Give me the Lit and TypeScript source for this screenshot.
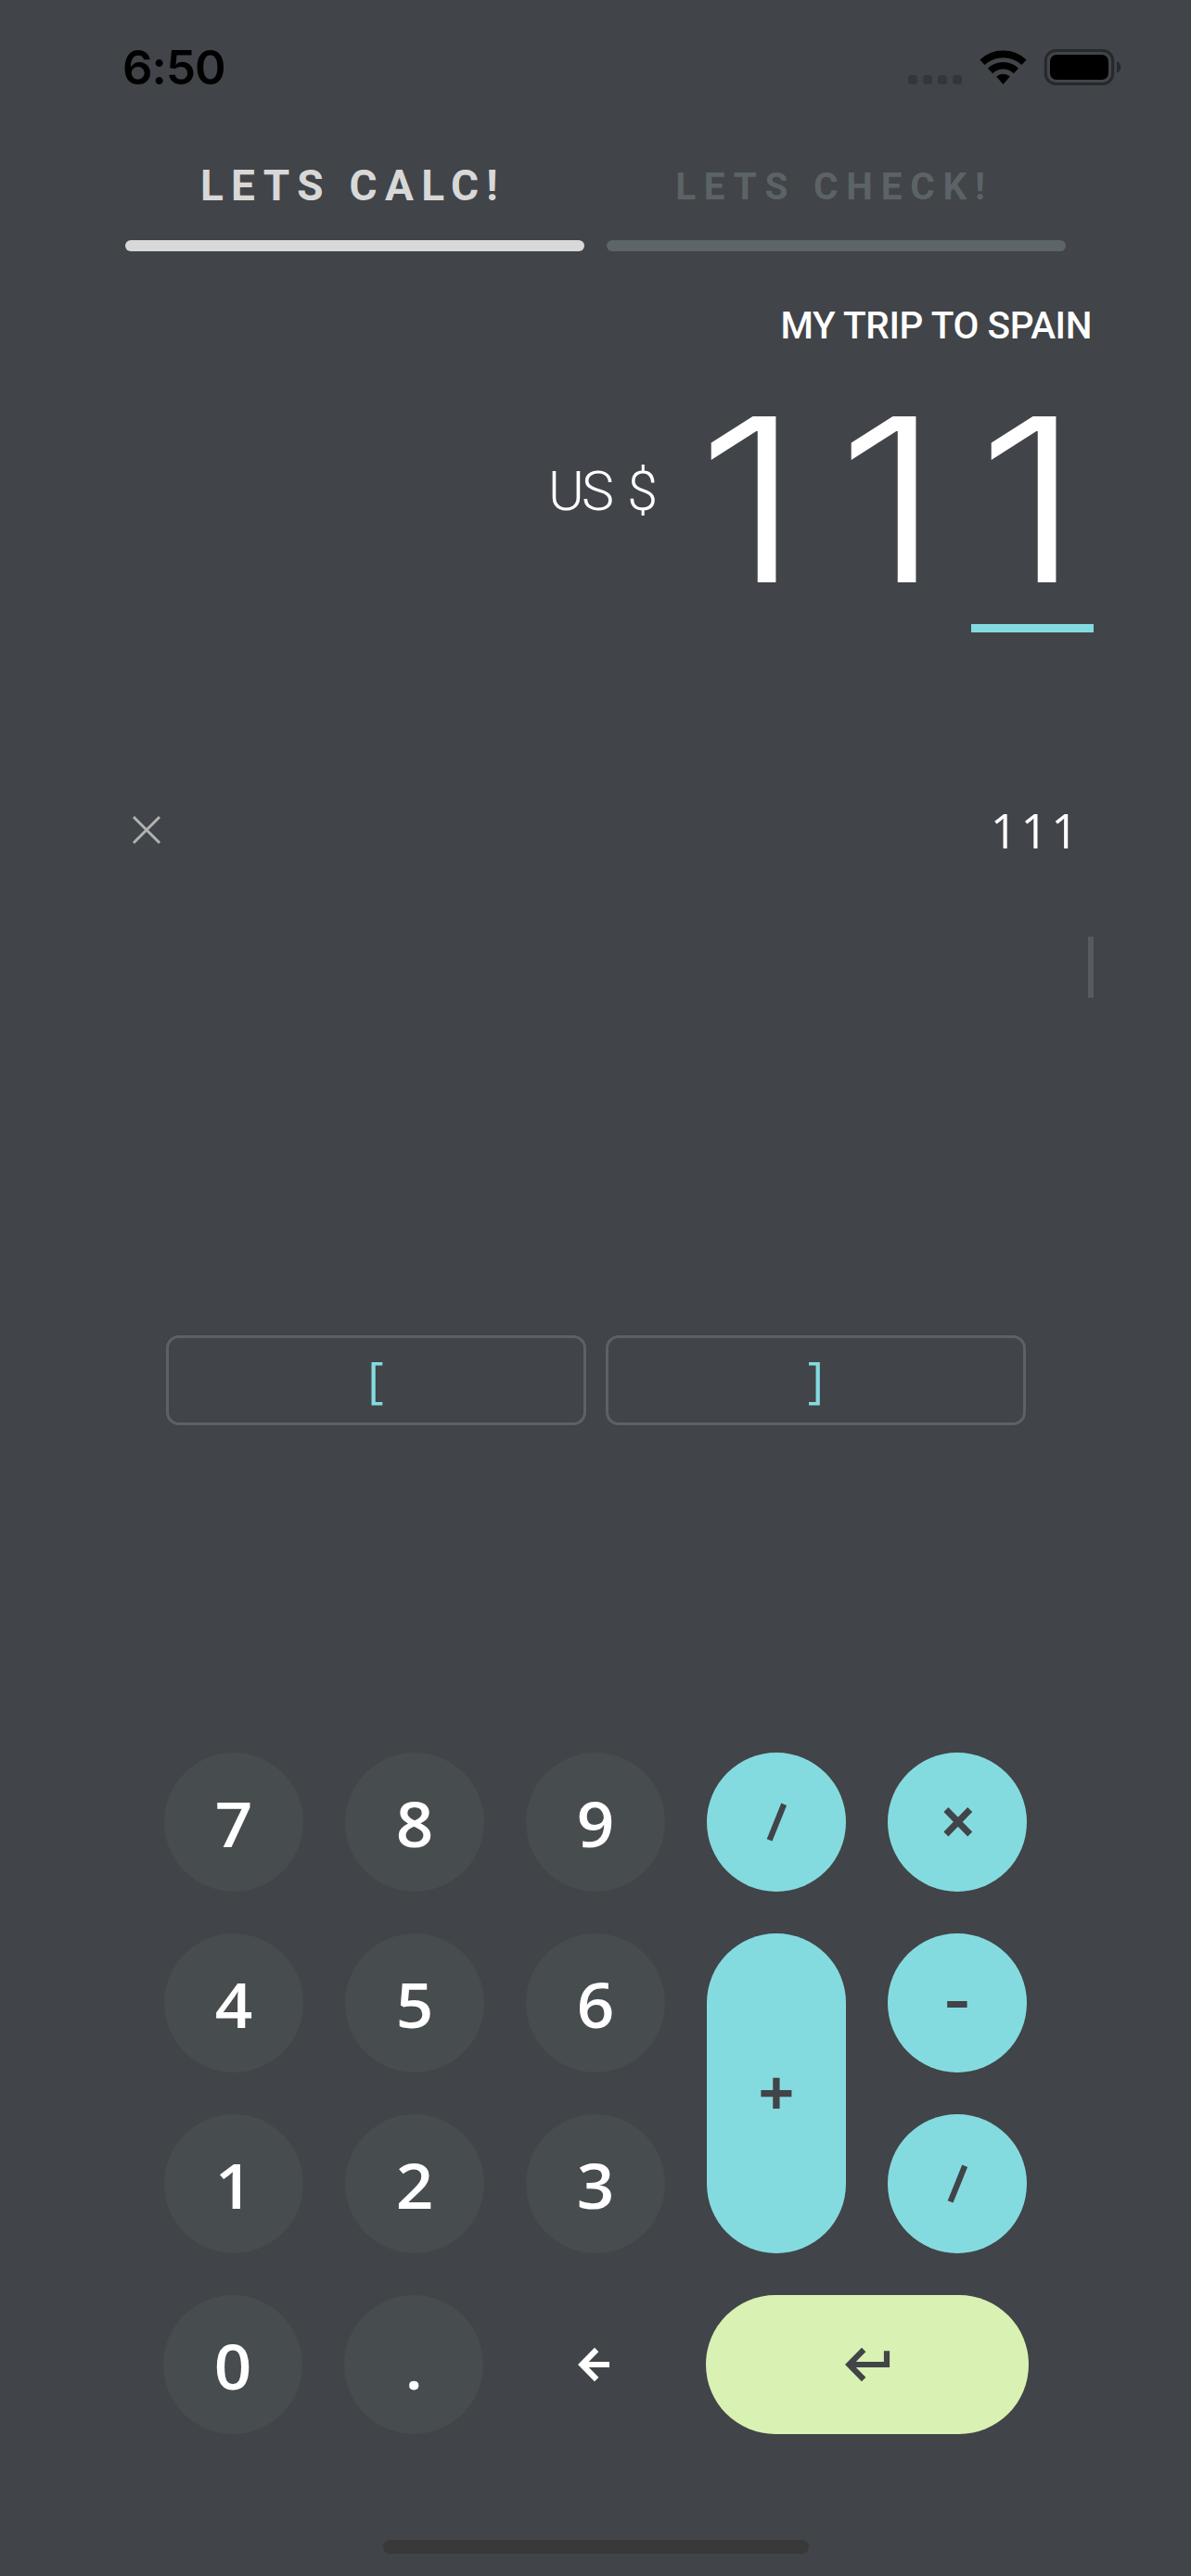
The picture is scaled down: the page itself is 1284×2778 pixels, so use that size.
import { LitElement, html, svg, css } from "lit";
import { customElement, property } from "lit/decorators.js";

const icons: Record<string, unknown> = {
  slash: svg`<path d="M39.2 13.8 23.6 52.4" stroke-width="6.3"/>`,
  times: svg`<path d="M18.9 19.5 44.7 46 M44.7 19.5 18.9 46" stroke-width="7"/>`,
  back: svg`<path d="M33.2 15 17.4 31 33.2 47 M17.4 31H47" stroke-width="6.2"/>`,
};

@customElement("calc-key")
export class CalcKey extends LitElement {
  @property({ reflect: true }) label = "";
  @property() icon = "";
  @property({ reflect: true }) kind = "digit";

  static styles = css`
    :host {
      display: flex;
      align-items: center;
      justify-content: center;
      border-radius: 75px;
      background: #474c4f;
      color: #fff;
      font: 600 67px/150px "Open Sans", sans-serif;
    }
    :host([kind="op"]) {
      background: #84dbdf;
      color: #414448;
    }
    :host([kind="enter"]) {
      background: #d9f1b2;
      color: #414448;
    }
    :host([kind="bare"]) {
      background: none;
    }
    .label {
      padding-top: 2px;
      transform: scaleX(1.06);
    }
    :host([kind="op"]) .label {
      padding: 0 0 4px;
      font-size: 68px;
      font-weight: 700;
      transform: none;
    }
    :host([label="-"]) .label {
      padding-bottom: 13px;
      transform: scale(1.2, 0.85);
    }
    svg {
      fill: none;
      stroke: currentColor;
      display: block;
    }
  `;

  render() {
    if (this.icon === "enter") {
      return html`<svg width="60" height="62" viewBox="0 0 60 62">
        <path d="M26.2 15 10.4 31 26.2 47 M10.4 31H51V16.2" stroke-width="6.2" />
      </svg>`;
    }
    if (this.icon) {
      return html`<svg width="62" height="66" viewBox=${this.icon === "back" ? "0 -2 62 66" : "0 0 62 66"}>${icons[this.icon]}</svg>`;
    }
    return html`<span class="label">${this.label}</span>`;
  }
}

@customElement("app-root")
export class AppRoot extends LitElement {
  static styles = css`
    :host {
      display: flex;
      flex-direction: column;
      box-sizing: border-box;
      width: 1284px;
      height: 2778px;
      overflow: hidden;
      background: #414448;
      color: #fff;
      font-family: Roboto, sans-serif;
    }
    .status {
      display: flex;
      align-items: flex-start;
      justify-content: space-between;
      height: 140px;
      box-sizing: border-box;
      padding: 42px 75px 0 132px;
      color: #000;
    }
    .time {
      font: 600 51px/62px Inter, sans-serif;
      letter-spacing: -1px;
    }
    .tabs {
      display: flex;
      gap: 24px;
      height: 131px;
      padding-left: 135px;
    }
    .tab {
      display: flex;
      flex-direction: column;
      justify-content: space-between;
      width: 495px;
      color: #5c6366;
      text-align: center;
      font-weight: 700;
      font-size: 40.5px;
      line-height: 122px;
      letter-spacing: 8.8px;
    }
    .tab.active {
      color: #d8d8d8;
      font-size: 46px;
      line-height: 120px;
      letter-spacing: 8.3px;
    }
    .tab span {
      height: 119px;
      padding-right: 4px;
    }
    .bar {
      height: 12px;
      border-radius: 6px;
      background: #5d646a;
    }
    .active .bar {
      background: #d8d8d8;
    }
    .trip {
      margin: 46px 107px 0 0;
      text-align: right;
      font-size: 40.5px;
      font-weight: 500;
      line-height: 68px;
      letter-spacing: -0.4px;
    }
    .amount {
      display: flex;
      justify-content: flex-end;
      align-items: center;
      height: 288px;
      padding-right: 93px;
    }
    .currency {
      padding-top: 2px;
      font: 300 59px/80px Roboto, sans-serif;
      letter-spacing: -3px;
      word-spacing: 6px;
    }
    .value {
      display: flex;
      justify-content: flex-end;
      box-sizing: border-box;
      width: 485px;
      padding: 20px 6px 0 0;
      font: 300 246px/288px Inter, sans-serif;
    }
    .value span {
      width: 151px;
      text-align: center;
      transform: scaleX(1.17);
    }
    .underline {
      align-self: flex-end;
      width: 132px;
      height: 9px;
      margin-right: 105px;
      background: #84dbdf;
    }
    .entry {
      display: flex;
      align-items: center;
      justify-content: space-between;
      height: 80px;
      margin: 173px 0 0;
      padding: 0 118px 0 142px;
    }
    .entry svg {
      stroke: #b2b2b2;
      stroke-width: 3;
    }
    .entry span {
      font: 400 51px/80px "Open Sans", sans-serif;
      letter-spacing: 3.6px;
    }
    .cursor {
      align-self: flex-end;
      width: 6px;
      height: 66px;
      margin: 75px 105px 0 0;
      background: #555b5f;
    }
    .brackets {
      display: flex;
      justify-content: space-between;
      margin: 364px 178px 0 178.5px;
    }
    .bracket {
      box-sizing: border-box;
      width: 453px;
      height: 97px;
      border: 3.5px solid #5b6265;
      border-radius: 14px;
      color: #84dbdf;
      text-align: center;
      font: 500 53px/88px "Open Sans", sans-serif;
    }
    .pad {
      display: grid;
      grid-template-columns: repeat(5, 150px);
      grid-template-rows: repeat(3, 150px);
      gap: 45px;
      margin: 353px 0 0 177px;
    }
    .plus {
      grid-column: 4;
      grid-row: 2 / span 2;
    }
    .last {
      display: grid;
      grid-template-columns: 150px 150px 150px 348px;
      grid-template-rows: 150px;
      gap: 45px;
      margin: 45px 0 0 176px;
    }
    .home {
      align-self: flex-start;
      width: 459px;
      height: 15px;
      margin: 114px 0 0 413px;
      border-radius: 8px;
      background: #393939;
    }
  `;

  render() {
    const d = (n: string) => html`<calc-key label=${n}></calc-key>`;
    return html`
      <div class="status">
        <span class="time">6:50</span>
        <svg width="232" height="52" viewBox="977 42 232 52">
          <g fill="#34363a">
            ${[979, 995, 1011, 1027].map((x) => svg`<rect x=${x} y="81" width="10" height="10" rx="3.5"/>`)}
          </g>
          <g fill="none" stroke="#000" stroke-width="7.6">
            <path d="M1059 67.2A33 33 0 0 1 1104 67.2" />
            <path d="M1067.6 76.4A20 20 0 0 1 1095.4 76.4" />
          </g>
          <path d="M1081.5 91 1074.2 82.6A11 11 0 0 1 1088.8 82.6Z" />
          <rect x="1127.3" y="54.5" width="72.4" height="36" rx="11" fill="none" stroke="#26292b" stroke-width="3" />
          <rect x="1132" y="59" width="63" height="27" rx="7" />
          <path d="M1204 66.3C1209.6 68.5 1209.6 76.5 1204 78.7Z" fill="#26292b" />
        </svg>
      </div>
      <div class="tabs">
        <div class="tab active"><span>LETS CALC!</span><div class="bar"></div></div>
        <div class="tab"><span>LETS CHECK!</span><div class="bar"></div></div>
      </div>
      <div class="trip">MY TRIP TO SPAIN</div>
      <div class="amount">
        <span class="currency">US $</span>
        <div class="value">${[..."111"].map((c) => html`<span>${c}</span>`)}</div>
      </div>
      <div class="underline"></div>
      <div class="entry">
        <svg width="32" height="32" viewBox="0 0 32 32"><path d="M2 2 30 30 M30 2 2 30" /></svg>
        <span>111</span>
      </div>
      <div class="cursor"></div>
      <div class="brackets">
        <div class="bracket">[</div>
        <div class="bracket">]</div>
      </div>
      <div class="pad">
        ${d("7")}${d("8")}${d("9")}
        <calc-key kind="op" icon="slash"></calc-key>
        <calc-key kind="op" icon="times"></calc-key>
        ${d("4")}${d("5")}${d("6")}
        <calc-key class="plus" kind="op" label="+"></calc-key>
        <calc-key kind="op" label="-"></calc-key>
        ${d("1")}${d("2")}${d("3")}
        <calc-key kind="op" icon="slash"></calc-key>
      </div>
      <div class="last">
        ${d("0")}${d(".")}
        <calc-key kind="bare" icon="back"></calc-key>
        <calc-key kind="enter" icon="enter"></calc-key>
      </div>
      <div class="home"></div>
    `;
  }
}
